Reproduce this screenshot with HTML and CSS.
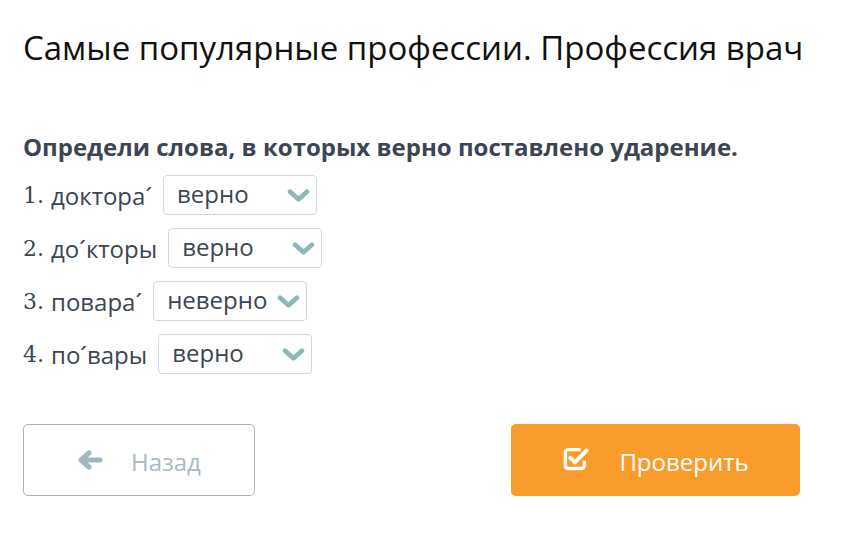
FILE: index.html
```html
<!DOCTYPE html>
<html lang="ru">
<head>
<meta charset="utf-8">
<link rel="stylesheet" href="styles.css">
</head>
<body>
<div class="page">
  <h1 class="title">Самые популярные профессии. Профессия врач</h1>
  <p class="task">Определи слова, в которых верно поставлено ударение.</p>
  <div class="rows">
    <div class="row"><span class="num">1.</span><span class="word">доктора´</span>
      <div class="select"><span>верно</span><svg class="chev" viewBox="0 0 24 16"><path d="M3 4 L12 12 L21 4" fill="none" stroke="#8cb8bb" stroke-width="5" stroke-linecap="round" stroke-linejoin="round"/></svg></div></div>
    <div class="row"><span class="num">2.</span><span class="word">до´кторы</span>
      <div class="select"><span>верно</span><svg class="chev" viewBox="0 0 24 16"><path d="M3 4 L12 12 L21 4" fill="none" stroke="#8cb8bb" stroke-width="5" stroke-linecap="round" stroke-linejoin="round"/></svg></div></div>
    <div class="row"><span class="num">3.</span><span class="word">повара´</span>
      <div class="select"><span>неверно</span><svg class="chev" viewBox="0 0 24 16"><path d="M3 4 L12 12 L21 4" fill="none" stroke="#8cb8bb" stroke-width="5" stroke-linecap="round" stroke-linejoin="round"/></svg></div></div>
    <div class="row"><span class="num">4.</span><span class="word">по´вары</span>
      <div class="select"><span>верно</span><svg class="chev" viewBox="0 0 24 16"><path d="M3 4 L12 12 L21 4" fill="none" stroke="#8cb8bb" stroke-width="5" stroke-linecap="round" stroke-linejoin="round"/></svg></div></div>
  </div>
  <div class="buttons">
    <button class="btn btn-back"><svg class="ico" viewBox="0 0 26 20"><path d="M23 10 H5 M12 3 L4 10 L12 17" fill="none" stroke="#a3b6c3" stroke-width="5" stroke-linecap="round" stroke-linejoin="round"/></svg><span>Назад</span></button>
    <button class="btn btn-check"><svg class="ico" viewBox="0 0 26 22"><path d="M17 3 H6 Q3 3 3 6 V17 Q3 20 6 20 H17 Q20 20 20 17 V13" fill="none" stroke="#fff" stroke-width="3"/><path d="M7.5 10.5 L11.5 14.5 L22 4" fill="none" stroke="#fff" stroke-width="3.6" stroke-linecap="round" stroke-linejoin="round"/></svg><span>Проверить</span></button>
  </div>
</div>
</body>
</html>
```
FILE: styles.css
```css
* { box-sizing: border-box; }
body {
  margin: 0;
  background: #fff;
  font-family: "Open Sans", "Liberation Sans", sans-serif;
}
.page {
  width: 830px;
  padding: 28px 0 0 23px;
}
.title {
  margin: 0;
  font-size: 33px;
  font-weight: 400;
  line-height: 40px;
  color: #111;
}
.task {
  margin: 64px 0 0;
  font-size: 24px;
  font-weight: 700;
  line-height: 30px;
  color: #3b4652;
}
.rows {
  display: flex;
  flex-direction: column;
  gap: 13px;
  margin-top: 13px;
}
.row {
  display: flex;
  align-items: center;
  height: 40px;
  color: #3b4652;
  font-size: 24px;
}
.num {
  font-family: "DejaVu Serif", "Liberation Serif", serif;
  font-size: 22px;
  margin-right: 7px;
}
.word {
  margin-right: 11px;
}
.select {
  width: 154px;
  height: 40px;
  border: 1px solid #cfd9dd;
  border-radius: 4px;
  display: flex;
  align-items: center;
  justify-content: space-between;
  padding: 0 6px 0 13px;
  font-size: 24px;
  color: #3b4652;
}
.select span { margin-top: -4px; }
.chev { width: 23px; height: 15px; flex: none; }
.buttons {
  display: flex;
  justify-content: space-between;
  width: 777px;
  margin-top: 50px;
}
.btn {
  height: 72px;
  border-radius: 5px;
  display: flex;
  align-items: center;
  justify-content: center;
  gap: 28px;
  font-family: "Open Sans", "Liberation Sans", sans-serif;
  font-size: 24px;
  padding: 0;
}
.btn-back {
  width: 232px;
  background: #fff;
  border: 1px solid #a7b4bd;
  color: #a9b9c5;
}
.btn-back .ico { width: 26px; height: 20px; }
.btn-check {
  width: 289px;
  background: #fa9c2c;
  border: none;
  color: #fff;
  gap: 28px;
}
.btn-check .ico { width: 29px; height: 25px; margin-top: -4px; }
.btn span { margin-top: 2px; }
```
